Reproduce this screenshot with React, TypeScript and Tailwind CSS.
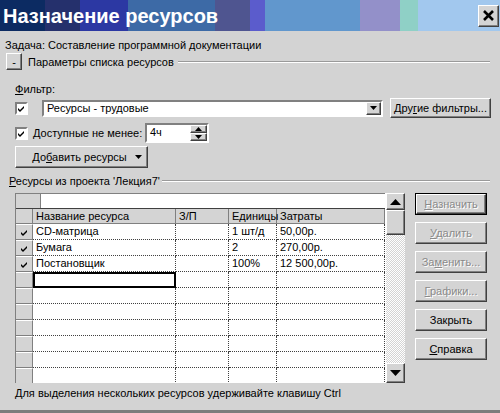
import React from 'react';

const rows = [
  { name: 'CD-матрица', zp: '', units: '1 шт/д', cost: '50,00р.', mark: true },
  { name: 'Бумага', zp: '', units: '2', cost: '270,00р.', mark: true },
  { name: 'Постановщик', zp: '', units: '100%', cost: '12 500,00р.', mark: true },
  { name: '', zp: '', units: '', cost: '', mark: false, sel: true },
  ...Array.from({ length: 6 }, () => ({ name: '', zp: '', units: '', cost: '', mark: false })),
];

const raised =
  'bg-[#d4d4d4] border border-t-white border-l-white border-r-[#404040] border-b-[#404040] shadow-[inset_-1px_-1px_#808080]';
const sunken =
  'border-2 border-t-[#808080] border-l-[#808080] border-r-white border-b-white';

function Check() {
  return (
    <svg width="7" height="7" viewBox="0 0 7 7">
      <path d="M0 3 L2 5 L6 1 L6 3 L2 7 L0 5 Z" fill="#000" />
    </svg>
  );
}

function Checkbox() {
  return (
    <div className={`w-[13px] h-[13px] bg-white flex items-center justify-center ${sunken}`}>
      <Check />
    </div>
  );
}

function Tri({ down = true, size = 'sm' }: { down?: boolean; size?: 'sm' | 'lg' }) {
  const w = size === 'lg' ? 11 : 7;
  const h = size === 'lg' ? 6 : 4;
  return (
    <svg width={w} height={h} viewBox={`0 0 ${w} ${h}`}>
      <path d={down ? `M0 0 L${w} 0 L${w / 2} ${h} Z` : `M0 ${h} L${w} ${h} L${w / 2} 0 Z`} fill="#000" />
    </svg>
  );
}

function EtchedLine() {
  return <div className="flex-1 h-0 border-t border-t-[#9a9a9a] border-b border-b-white" />;
}

function SideButton({ label, u, disabled, def }: { label: string; u?: number; disabled?: boolean; def?: boolean }) {
  return (
    <div className={`h-[22px] w-[72px] ${def ? 'border border-black' : ''}`}>
      <div
        className={`h-full w-full flex items-center justify-center ${raised} ${
          disabled ? 'text-[#8a8a8a] [text-shadow:1px_1px_0_#fff]' : 'text-black'
        }`}
      >
        {u === undefined ? (
          <span>{label}</span>
        ) : (
          <span>
            {label.slice(0, u)}
            <span className="underline">{label.slice(u, u + 1)}</span>
            {label.slice(u + 1)}
          </span>
        )}
      </div>
    </div>
  );
}

export default function App() {
  return (
    <div className="w-[500px] h-[413px] bg-[#d3d3d3] flex flex-col overflow-hidden text-[11px] leading-[14px] text-black font-['Liberation_Sans',Arial,sans-serif] border-b-[3px] border-b-[#7c7c7c]">
      {/* Title bar */}
      <div className="h-[31px] shrink-0 flex items-center justify-between pl-[3px] pr-[1px] bg-[linear-gradient(to_right,#0c2b62_0px,#0c2b62_45px,#25306c_45px,#25306c_80px,#2c38a3_80px,#2c38a3_128px,#3d6aa6_128px,#3d6aa6_215px,#4f5590_215px,#4f5590_250px,#5b5ccc_250px,#5b5ccc_265px,#6197cd_265px,#6197cd_360px,#9390c9_360px,#9390c9_400px,#8fd0c6_400px,#8fd0c6_418px,#a2c8ee_418px,#a2c8ee_500px)]">
        <span className="text-white font-bold text-[20px] leading-none">Назначение ресурсов</span>
        <div className={`w-[21px] h-[22px] flex items-center justify-center ${raised}`}>
          <svg width="11" height="11" viewBox="0 0 11 11">
            <path d="M1 1 L10 10 M10 1 L1 10" stroke="#000" strokeWidth="2.6" />
          </svg>
        </div>
      </div>

      <div className="flex flex-col px-[5px]">
        <div className="mt-[7px] h-[14px]">Задача: Составление программной документации</div>

        <div className="mt-[1px] h-[17px] flex items-center">
          <div className={`w-[16px] h-[17px] ml-[1px] flex items-center justify-center ${raised}`}>-</div>
          <span className="ml-[6px]">Параметры списка ресурсов</span>
          <div className="flex-1 ml-[4px] mr-[5px] flex">
            <EtchedLine />
          </div>
        </div>

        <div className="mt-[12px] h-[14px] pl-[10px]">
          <span className="underline">Ф</span>ильтр:
        </div>

        <div className="mt-[2px] h-[20px] flex items-center pl-[10px]">
          <Checkbox />
          <div className={`ml-[14px] w-[341px] h-[17px] bg-white flex items-center ${sunken}`}>
            <span className="flex-1 pl-[3px]">Ресурсы - трудовые</span>
            <div className={`w-[15px] h-[13px] flex items-center justify-center ${raised}`}>
              <Tri />
            </div>
          </div>
          <div className={`ml-[7px] w-[101px] h-[20px] flex items-center justify-center ${raised}`}>
            <span>
              Дру<span className="underline">г</span>ие фильтры...
            </span>
          </div>
        </div>

        <div className="mt-[5px] h-[20px] flex items-center pl-[10px]">
          <Checkbox />
          <span className="ml-[5px] w-[112px]">
            <span className="underline">Д</span>оступные не менее:
          </span>
          <div className={`w-[64px] h-[20px] bg-white flex ${sunken}`}>
            <span className="flex-1 pl-[3px] leading-[15px]">4ч</span>
            <div className="w-[17px] flex flex-col">
              <div className={`flex-1 flex items-center justify-center ${raised}`}>
                <Tri down={false} size="sm" />
              </div>
              <div className={`flex-1 flex items-center justify-center ${raised}`}>
                <Tri size="sm" />
              </div>
            </div>
          </div>
        </div>

        <div className="mt-[3px] pl-[10px]">
          <div className={`w-[133px] h-[22px] flex items-center ${raised}`}>
            <span className="flex-1 text-center pl-[14px]">
              До<span className="underline">б</span>авить ресурсы
            </span>
            <div className="w-[18px] flex items-center justify-center">
              <Tri />
            </div>
          </div>
        </div>

        <div className="mt-[6px] h-[14px] flex items-center pl-[4px]">
          <span>
            <span className="underline">Р</span>есурсы из проекта 'Лекция7'
          </span>
          <div className="flex-1 ml-[2px] mr-[5px] flex">
            <EtchedLine />
          </div>
        </div>

        <div className="mt-[5px] flex pl-[10px]">
          {/* Grid */}
          <div className="w-[390px] h-[190px] flex bg-white border-l border-[#808080] overflow-hidden">
            <div className="w-[369px] flex flex-col">
              <div className="h-[16px] shrink-0 flex border-t border-[#808080] border-b border-b-[#404040]">
                <div className="w-[25px] bg-[#d4d4d4] border-r border-[#808080]" />
                <div className="flex-1 bg-white" />
              </div>
              <div className="h-[15px] shrink-0 flex bg-[#d4d4d4] border-b border-[#808080]">
                <div className="w-[17px] border-r border-[#808080]" />
                <div className="w-[143px] pl-[3px] border-r border-[#808080] leading-[14px]">Название ресурса</div>
                <div className="w-[53px] pl-[3px] border-r border-[#808080] leading-[14px]">З/П</div>
                <div className="w-[48px] pl-[3px] border-r border-[#808080] leading-[14px]">Единицы</div>
                <div className="w-[108px] pl-[3px] border-r border-[#808080] leading-[14px]">Затраты</div>
              </div>
              {rows.map((r, i) => (
                <div key={i} className="h-[16px] shrink-0 flex">
                  <div className="w-[17px] bg-[#d4d4d4] border-t border-t-white border-b border-b-[#808080] border-r border-r-[#808080] flex items-center justify-center">
                    {r.mark && <Check />}
                  </div>
                  <div
                    className={`w-[143px] pl-[3px] leading-[15px] ${
                      r.sel ? 'border-2 border-black' : 'border-b border-dotted border-[#404040] border-r'
                    }`}
                  >
                    {r.name}
                  </div>
                  <div className="w-[53px] pl-[3px] leading-[15px] border-b border-r border-dotted border-[#404040]">{r.zp}</div>
                  <div className="w-[48px] pl-[3px] leading-[15px] border-b border-r border-dotted border-[#404040]">{r.units}</div>
                  <div className="w-[108px] pl-[3px] leading-[15px] border-b border-r border-dotted border-[#404040]">{r.cost}</div>
                </div>
              ))}
            </div>
            <div className="w-[1px] bg-white" />
            {/* Scrollbar */}
            <div className="w-[20px] flex flex-col bg-[repeating-conic-gradient(#ffffff_0_25%,#d4d4d4_0_50%)] bg-[length:2px_2px]">
              <div className={`h-[17px] flex items-center justify-center ${raised}`}>
                <Tri down={false} size="lg" />
              </div>
              <div className={`h-[25px] ${raised}`} />
              <div className="flex-1" />
              <div className={`h-[20px] flex items-center justify-center ${raised}`}>
                <Tri size="lg" />
              </div>
            </div>
          </div>

          {/* Side buttons */}
          <div className="ml-[10px] flex flex-col gap-[7px]">
            <SideButton label="Назначить" u={0} disabled def />
            <SideButton label="Удалить" u={0} disabled />
            <SideButton label="Заменить..." u={2} disabled />
            <SideButton label="Графики..." u={0} disabled />
            <SideButton label="Закрыть" />
            <SideButton label="Справка" u={0} />
          </div>
        </div>

        <div className="mt-[3px] h-[14px] pl-[10px]">Для выделения нескольких ресурсов удерживайте клавишу Ctrl</div>
      </div>
    </div>
  );
}
